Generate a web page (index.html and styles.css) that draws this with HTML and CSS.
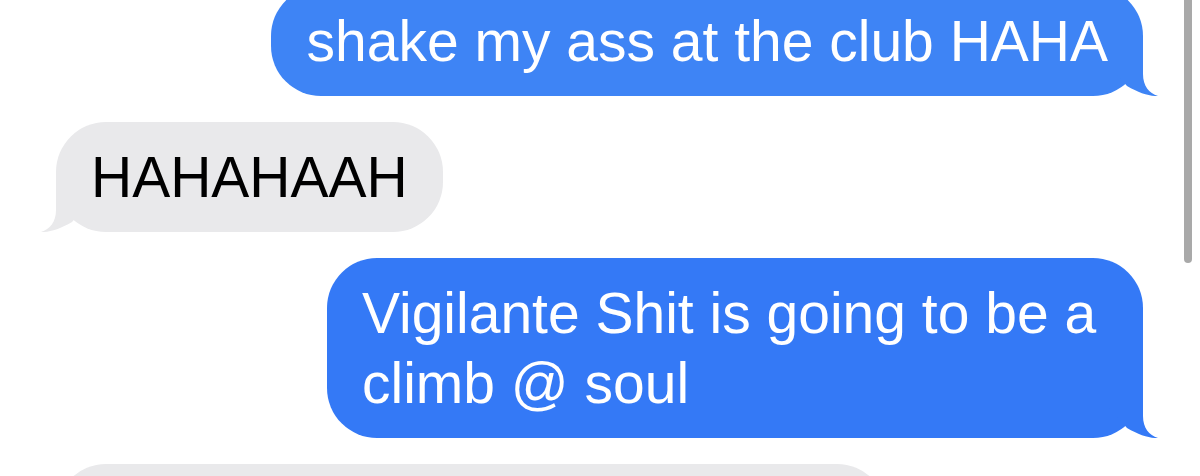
FILE: index.html
```html
<!DOCTYPE html>
<html>
<head>
<meta charset="utf-8">
<link rel="stylesheet" href="styles.css">
</head>
<body>
<div class="thread">
  <div class="msg sent">
    <div class="bubble top-blue">shake my ass at the club HAHA<svg class="tail" viewBox="0 0 50 50"><path d="M0,0 H34 V28 C34,40 40,47 49,50 C41,50.5 30,47 18,40 L0,20 Z"/></svg></div>
  </div>
  <div class="msg received">
    <div class="bubble">HAHAHAAH<svg class="tail" viewBox="0 0 50 50"><path d="M0,0 H34 V28 C34,40 40,47 49,50 C41,50.5 30,47 18,40 L0,20 Z"/></svg></div>
  </div>
  <div class="msg sent">
    <div class="bubble wrapped">Vigilante Shit is going to be a<br>climb @ soul<svg class="tail" viewBox="0 0 50 50"><path d="M0,0 H34 V28 C34,40 40,47 49,50 C41,50.5 30,47 18,40 L0,20 Z"/></svg></div>
  </div>
  <div class="msg received">
    <div class="bubble wide">&nbsp;</div>
  </div>
</div>
<div class="scrollbar"></div>
</body>
</html>
```
FILE: styles.css
```css
html, body {
  margin: 0;
  padding: 0;
  background: #ffffff;
  overflow: hidden;
  height: 476px;
}
.thread {
  display: flex;
  flex-direction: column;
  gap: 26px;
  margin-top: -14px;
  font-family: "Liberation Sans", Arial, sans-serif;
}
.msg {
  display: flex;
}
.msg.sent {
  justify-content: flex-end;
  padding-right: 57px;
}
.msg.received {
  justify-content: flex-start;
  padding-left: 56px;
}
.bubble {
  position: relative;
  font-size: 57px;
  line-height: 70px;
  padding: 20px 35px;
  border-radius: 50px;
  white-space: nowrap;
}
.sent .bubble {
  background: #3479f6;
  color: #ffffff;
  fill: #3479f6;
}
.sent .bubble.top-blue {
  background: #3e84f5;
  fill: #3e84f5;
}
.received .bubble {
  background: #e9e9eb;
  color: #000000;
  fill: #e9e9eb;
}
.bubble.wrapped {
  width: 816px;
  box-sizing: border-box;
}
.bubble.wide {
  width: 831px;
  box-sizing: border-box;
}
.tail {
  position: absolute;
  bottom: 0;
  width: 50px;
  height: 50px;
}
.sent .tail {
  right: -16px;
}
.received .tail {
  left: -16px;
  transform: scaleX(-1);
}
.scrollbar {
  position: absolute;
  top: -10px;
  right: 8px;
  width: 8px;
  height: 273px;
  border-radius: 4px;
  background: #a9a9a9;
}
```
